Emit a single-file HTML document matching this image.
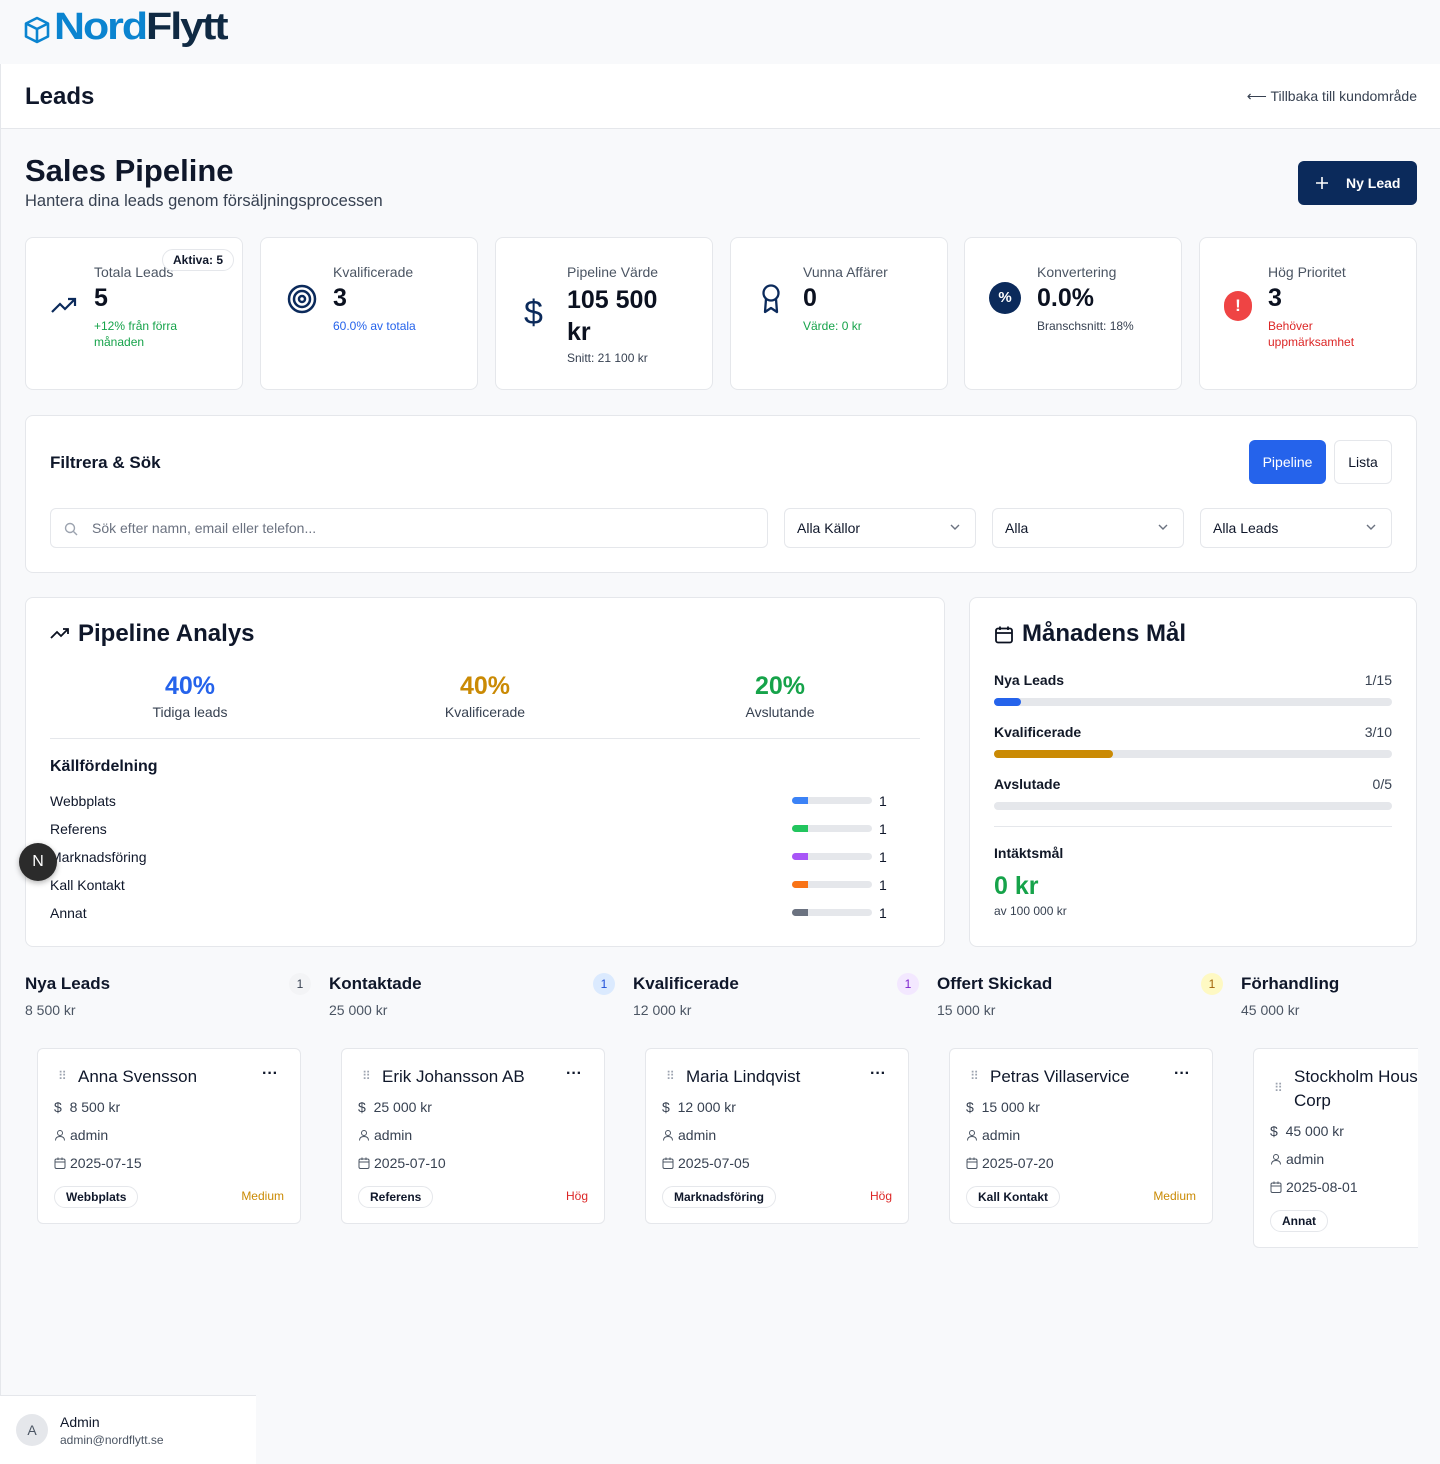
<!DOCTYPE html>
<html><head><meta charset="utf-8"><style>
*{box-sizing:border-box;margin:0;padding:0}
body{width:1440px;height:1464px;background:#f8f9fb;font-family:"Liberation Sans",Arial,sans-serif;color:#0f172a;position:relative;overflow:hidden}
.a{position:absolute}
.card{position:absolute;background:#fff;border:1px solid #e5e7eb;border-radius:8px}
.stat .lbl{font-size:14px;color:#4b5563}
.stat .val{font-size:25px;font-weight:bold;color:#0b1120}
.stat .sub{font-size:12px;line-height:16px}
.sel{position:absolute;top:508px;height:40px;background:#fff;border:1px solid #e5e7eb;border-radius:6px;font-size:14px;padding:11px 12px}
.sel svg{position:absolute;right:14px;top:14px}
.bar{position:absolute;left:792px;width:80px;height:7px;border-radius:4px;background:#e5e7eb;overflow:hidden}
.bar i{display:block;height:100%;width:16px}
.lc{position:absolute;background:#fff;border:1px solid #e5e7eb;border-radius:6px;width:264px}
.lc .t{position:absolute;left:40px;top:18px;font-size:17px}
.lc .row{position:absolute;left:16px;font-size:14px;color:#374151;display:flex;align-items:center;gap:4px}
.lc .row svg{flex:none}
.tag{position:absolute;left:16px;border:1px solid #e5e7eb;border-radius:12px;font-size:12px;font-weight:bold;padding:3px 11px}
.pr{position:absolute;right:16px;font-size:12px}
.colh{position:absolute;top:974px}
.colh b{font-size:17px;font-weight:bold;display:block}
.colh span{font-size:14px;color:#4b5563;display:block;margin-top:8px}
.cnt{position:absolute;top:973px;width:22px;height:22px;border-radius:11px;font-size:12px;text-align:center;line-height:22px}
</style></head><body>
<svg width="0" height="0" style="position:absolute"><defs>
<symbol id="u" viewBox="0 0 12 12"><circle cx="6" cy="4" r="2.5" fill="none" stroke="#4b5563" stroke-width="1"/><path d="M1.5 11.5C1.5 8.5 3.5 7.5 6 7.5S10.5 8.5 10.5 11.5" fill="none" stroke="#4b5563" stroke-width="1"/></symbol>
<symbol id="c" viewBox="0 0 12 12"><rect x="1" y="2" width="10" height="9.5" rx="1.5" fill="none" stroke="#4b5563" stroke-width="1"/><path d="M1 5H11M4 0.5V3M8 0.5V3" stroke="#4b5563" stroke-width="1"/></symbol>
</defs></svg>
<!-- logo -->
<svg class="a" style="left:24px;top:16px" width="26" height="28" viewBox="0 0 26 28"><path d="M13 2L24 7.5V20.5L13 26L2 20.5V7.5Z M2 7.5L13 13L24 7.5 M13 13V26" fill="none" stroke="#0b84d0" stroke-width="2.6" stroke-linejoin="round"/></svg>
<div class="a" style="left:54px;top:6px;font-size:38px;font-weight:bold;letter-spacing:-1.8px;transform:scaleX(1.13);transform-origin:left"><span style="color:#0b84d0">Nord</span><span style="color:#102a43">Flytt</span></div>
<!-- header -->
<div class="a" style="left:0;top:64px;width:1440px;height:65px;background:#fff;border-bottom:1px solid #e5e7eb;border-left:1px solid #e5e7eb"></div>
<div class="a" style="left:0;top:128px;width:1px;height:1270px;background:#e5e7eb"></div>
<div class="a" style="left:25px;top:83px;font-size:24px;font-weight:bold">Leads</div>
<div class="a" style="right:23px;top:88px;font-size:14px;color:#374151">⟵ Tillbaka till kundområde</div>
<div class="a" style="left:25px;top:153px;font-size:31px;font-weight:bold">Sales Pipeline</div>
<div class="a" style="left:25px;top:192px;font-size:16.5px;color:#374151">Hantera dina leads genom försäljningsprocessen</div>
<div class="a" style="left:1298px;top:161px;width:119px;height:44px;background:#0b2a5b;border-radius:6px;color:#fff;font-size:14px;font-weight:bold;padding:14px 0 0 48px">Ny Lead</div>
<svg class="a" style="left:1315px;top:176px" width="14" height="14" viewBox="0 0 14 14"><path d="M7 1V13M1 7H13" stroke="#fff" stroke-width="1.6"/></svg>
<!-- stats -->
<div class="card stat" style="left:25px;top:237px;width:218px;height:153px">
 <svg class="a" style="left:24px;top:58px" width="28" height="20" viewBox="0 0 28 20"><path d="M2 16L10 8L15 13L25 3M18 3H25V10" fill="none" stroke="#0b2a5b" stroke-width="2.2"/></svg>
 <div class="a lbl" style="left:68px;top:26px">Totala Leads</div>
 <div class="a val" style="left:68px;top:46px">5</div>
 <div class="a sub" style="left:68px;top:80px;color:#16a34a">+12% från förra<br>månaden</div>
 <div class="a" style="left:136px;top:11px;border:1px solid #e5e7eb;background:#fff;border-radius:11px;font-size:12px;font-weight:bold;padding:3px 10px">Aktiva: 5</div>
</div>
<div class="card stat" style="left:260px;top:237px;width:218px;height:153px">
 <svg class="a" style="left:25px;top:45px" width="32" height="32" viewBox="0 0 32 32"><circle cx="16" cy="16" r="13" fill="none" stroke="#0b2a5b" stroke-width="2.5"/><circle cx="16" cy="16" r="8" fill="none" stroke="#0b2a5b" stroke-width="2.5"/><circle cx="16" cy="16" r="3" fill="none" stroke="#0b2a5b" stroke-width="2.5"/></svg>
 <div class="a lbl" style="left:72px;top:26px">Kvalificerade</div>
 <div class="a val" style="left:72px;top:46px">3</div>
 <div class="a sub" style="left:72px;top:80px;color:#2563eb">60.0% av totala</div>
</div>
<div class="card stat" style="left:495px;top:237px;width:218px;height:153px">
 <div class="a" style="left:28px;top:56px;font-size:34px;color:#0b2a5b">$</div>
 <div class="a lbl" style="left:71px;top:26px">Pipeline Värde</div>
 <div class="a val" style="left:71px;top:46px;line-height:32px">105 500<br>kr</div>
 <div class="a sub" style="left:71px;top:112px;color:#374151">Snitt: 21 100 kr</div>
</div>
<div class="card stat" style="left:730px;top:237px;width:218px;height:153px">
 <svg class="a" style="left:28px;top:45px" width="24" height="32" viewBox="0 0 24 32"><circle cx="12" cy="10" r="7.5" fill="none" stroke="#0b2a5b" stroke-width="2.3"/><path d="M7 16L6 29L12 25L18 29L17 16" fill="none" stroke="#0b2a5b" stroke-width="2.3" stroke-linejoin="round"/></svg>
 <div class="a lbl" style="left:72px;top:26px">Vunna Affärer</div>
 <div class="a val" style="left:72px;top:46px">0</div>
 <div class="a sub" style="left:72px;top:80px;color:#16a34a">Värde: 0 kr</div>
</div>
<div class="card stat" style="left:964px;top:237px;width:218px;height:153px">
 <div class="a" style="left:24px;top:44px;width:32px;height:32px;border-radius:16px;background:#0b2a5b;color:#fff;font-size:15px;font-weight:bold;text-align:center;line-height:32px">%</div>
 <div class="a lbl" style="left:72px;top:26px">Konvertering</div>
 <div class="a val" style="left:72px;top:46px">0.0%</div>
 <div class="a sub" style="left:72px;top:80px;color:#374151">Branschsnitt: 18%</div>
</div>
<div class="card stat" style="left:1199px;top:237px;width:218px;height:153px">
 <div class="a" style="left:24px;top:53px;width:28px;height:30px;border-radius:14px;background:#ef4444;color:#fff;font-size:17px;font-weight:bold;text-align:center;line-height:30px">!</div>
 <div class="a lbl" style="left:68px;top:26px">Hög Prioritet</div>
 <div class="a val" style="left:68px;top:46px">3</div>
 <div class="a sub" style="left:68px;top:80px;color:#dc2626">Behöver<br>uppmärksamhet</div>
</div>
<!-- filter -->
<div class="card" style="left:25px;top:415px;width:1392px;height:158px"></div>
<div class="a" style="left:50px;top:453px;font-size:17px;font-weight:bold">Filtrera &amp; Sök</div>
<div class="a" style="left:1249px;top:440px;width:77px;height:44px;background:#2563eb;border-radius:6px;color:#fff;font-size:14px;text-align:center;line-height:44px">Pipeline</div>
<div class="a" style="left:1334px;top:440px;width:58px;height:44px;background:#fff;border:1px solid #e5e7eb;border-radius:6px;font-size:14px;text-align:center;line-height:42px">Lista</div>
<div class="sel" style="left:50px;width:718px;color:#6b7280;padding-left:41px"><svg style="position:absolute;left:13px;top:13px" width="14" height="14" viewBox="0 0 14 14"><circle cx="6" cy="6" r="4.5" fill="none" stroke="#9ca3af" stroke-width="1.4"/><path d="M9.5 9.5L13 13" stroke="#9ca3af" stroke-width="1.4"/></svg>Sök efter namn, email eller telefon...</div>
<div class="sel" style="left:784px;width:192px">Alla Källor<svg width="12" height="8" viewBox="0 0 12 8"><path d="M2 2L6 6L10 2" fill="none" stroke="#6b7280" stroke-width="1.4"/></svg></div>
<div class="sel" style="left:992px;width:192px">Alla<svg width="12" height="8" viewBox="0 0 12 8"><path d="M2 2L6 6L10 2" fill="none" stroke="#6b7280" stroke-width="1.4"/></svg></div>
<div class="sel" style="left:1200px;width:192px">Alla Leads<svg width="12" height="8" viewBox="0 0 12 8"><path d="M2 2L6 6L10 2" fill="none" stroke="#6b7280" stroke-width="1.4"/></svg></div>
<!-- pipeline analys -->
<div class="card" style="left:25px;top:597px;width:920px;height:350px"></div>
<svg class="a" style="left:50px;top:626px" width="20" height="16" viewBox="0 0 20 16"><path d="M1 12L7 6L11 10L18 3M13 3H18V8" fill="none" stroke="#0b1120" stroke-width="1.8"/></svg>
<div class="a" style="left:78px;top:620px;font-size:24px;font-weight:bold">Pipeline Analys</div>
<div class="a" style="left:90px;top:672px;width:200px;text-align:center;font-size:25px;font-weight:bold;color:#2563eb">40%</div>
<div class="a" style="left:90px;top:704px;width:200px;text-align:center;font-size:14px;color:#374151">Tidiga leads</div>
<div class="a" style="left:385px;top:672px;width:200px;text-align:center;font-size:25px;font-weight:bold;color:#ca8a04">40%</div>
<div class="a" style="left:385px;top:704px;width:200px;text-align:center;font-size:14px;color:#374151">Kvalificerade</div>
<div class="a" style="left:680px;top:672px;width:200px;text-align:center;font-size:25px;font-weight:bold;color:#16a34a">20%</div>
<div class="a" style="left:680px;top:704px;width:200px;text-align:center;font-size:14px;color:#374151">Avslutande</div>
<div class="a" style="left:50px;top:738px;width:870px;height:1px;background:#e5e7eb"></div>
<div class="a" style="left:50px;top:758px;font-size:16px;font-weight:bold">Källfördelning</div>
<div class="a" style="left:50px;top:787px;font-size:14px;line-height:28px">Webbplats<br>Referens<br>Marknadsföring<br>Kall Kontakt<br>Annat</div>
<div class="bar" style="top:797px"><i style="background:#3b82f6"></i></div>
<div class="bar" style="top:825px"><i style="background:#22c55e"></i></div>
<div class="bar" style="top:853px"><i style="background:#a855f7"></i></div>
<div class="bar" style="top:881px"><i style="background:#f97316"></i></div>
<div class="bar" style="top:909px"><i style="background:#6b7280"></i></div>
<div class="a" style="left:879px;top:787px;font-size:14px;line-height:28px">1<br>1<br>1<br>1<br>1</div>
<div class="a" style="left:19px;top:843px;width:38px;height:38px;border-radius:19px;background:#2b2b2b;color:#fff;font-size:16px;text-align:center;line-height:38px;box-shadow:0 2px 6px rgba(0,0,0,.3)">N</div>
<!-- mål -->
<div class="card" style="left:969px;top:597px;width:448px;height:350px"></div>
<svg class="a" style="left:994px;top:625px" width="20" height="20" viewBox="0 0 20 20"><rect x="2" y="3.5" width="16" height="14" rx="2" fill="none" stroke="#0b1120" stroke-width="1.8"/><path d="M2 8H18M6 1.5V5M14 1.5V5" stroke="#0b1120" stroke-width="1.8"/></svg>
<div class="a" style="left:1022px;top:620px;font-size:24px;font-weight:bold">Månadens Mål</div>
<div class="a" style="left:994px;top:672px;font-size:14px;font-weight:bold;color:#111827">Nya Leads</div><div class="a" style="left:1360px;top:672px;width:32px;text-align:right;font-size:14px;color:#374151">1/15</div>
<div class="a" style="left:994px;top:698px;width:398px;height:8px;border-radius:4px;background:#e5e7eb"><div style="width:27px;height:8px;border-radius:4px;background:#2563eb"></div></div>
<div class="a" style="left:994px;top:724px;font-size:14px;font-weight:bold;color:#111827">Kvalificerade</div><div class="a" style="left:1350px;top:724px;width:42px;text-align:right;font-size:14px;color:#374151">3/10</div>
<div class="a" style="left:994px;top:750px;width:398px;height:8px;border-radius:4px;background:#e5e7eb"><div style="width:119px;height:8px;border-radius:4px;background:#ca8a04"></div></div>
<div class="a" style="left:994px;top:776px;font-size:14px;font-weight:bold;color:#111827">Avslutade</div><div class="a" style="left:1350px;top:776px;width:42px;text-align:right;font-size:14px;color:#374151">0/5</div>
<div class="a" style="left:994px;top:802px;width:398px;height:8px;border-radius:4px;background:#e5e7eb"></div>
<div class="a" style="left:994px;top:826px;width:398px;height:1px;background:#e5e7eb"></div>
<div class="a" style="left:994px;top:845px;font-size:14px;font-weight:bold;color:#111827">Intäktsmål</div>
<div class="a" style="left:994px;top:872px;font-size:25px;font-weight:bold;color:#16a34a">0 kr</div>
<div class="a" style="left:994px;top:904px;font-size:12px;color:#374151">av 100 000 kr</div>
<!-- kanban -->
<div class="colh" style="left:25px"><b>Nya Leads</b><span>8 500 kr</span></div><div class="cnt" style="left:289px;background:#f3f4f6;color:#374151">1</div>
<div class="colh" style="left:329px"><b>Kontaktade</b><span>25 000 kr</span></div><div class="cnt" style="left:593px;background:#dbeafe;color:#1d4ed8">1</div>
<div class="colh" style="left:633px"><b>Kvalificerade</b><span>12 000 kr</span></div><div class="cnt" style="left:897px;background:#f3e8ff;color:#7e22ce">1</div>
<div class="colh" style="left:937px"><b>Offert Skickad</b><span>15 000 kr</span></div><div class="cnt" style="left:1201px;background:#fef9c3;color:#a16207">1</div>
<div class="colh" style="left:1241px"><b>Förhandling</b><span>45 000 kr</span></div>

<div class="lc" style="left:37px;top:1048px;height:176px"><div class="a" style="left:20px;top:20px;color:#9ca3af;font-size:12px">⠿</div><div class="t">Anna Svensson</div><div class="a" style="right:22px;top:16px;font-weight:bold">···</div>
<div class="row" style="top:50px">$ &nbsp;8 500 kr</div><div class="row" style="top:78px"><svg width="12" height="12"><use href="#u"/></svg>admin</div><div class="row" style="top:106px"><svg width="12" height="12"><use href="#c"/></svg>2025-07-15</div><div class="tag" style="top:137px">Webbplats</div><div class="pr" style="top:140px;color:#ca8a04">Medium</div></div>
<div class="lc" style="left:341px;top:1048px;height:176px"><div class="a" style="left:20px;top:20px;color:#9ca3af;font-size:12px">⠿</div><div class="t">Erik Johansson AB</div><div class="a" style="right:22px;top:16px;font-weight:bold">···</div>
<div class="row" style="top:50px">$ &nbsp;25 000 kr</div><div class="row" style="top:78px"><svg width="12" height="12"><use href="#u"/></svg>admin</div><div class="row" style="top:106px"><svg width="12" height="12"><use href="#c"/></svg>2025-07-10</div><div class="tag" style="top:137px">Referens</div><div class="pr" style="top:140px;color:#dc2626">Hög</div></div>
<div class="lc" style="left:645px;top:1048px;height:176px"><div class="a" style="left:20px;top:20px;color:#9ca3af;font-size:12px">⠿</div><div class="t">Maria Lindqvist</div><div class="a" style="right:22px;top:16px;font-weight:bold">···</div>
<div class="row" style="top:50px">$ &nbsp;12 000 kr</div><div class="row" style="top:78px"><svg width="12" height="12"><use href="#u"/></svg>admin</div><div class="row" style="top:106px"><svg width="12" height="12"><use href="#c"/></svg>2025-07-05</div><div class="tag" style="top:137px">Marknadsföring</div><div class="pr" style="top:140px;color:#dc2626">Hög</div></div>
<div class="lc" style="left:949px;top:1048px;height:176px"><div class="a" style="left:20px;top:20px;color:#9ca3af;font-size:12px">⠿</div><div class="t">Petras Villaservice</div><div class="a" style="right:22px;top:16px;font-weight:bold">···</div>
<div class="row" style="top:50px">$ &nbsp;15 000 kr</div><div class="row" style="top:78px"><svg width="12" height="12"><use href="#u"/></svg>admin</div><div class="row" style="top:106px"><svg width="12" height="12"><use href="#c"/></svg>2025-07-20</div><div class="tag" style="top:137px">Kall Kontakt</div><div class="pr" style="top:140px;color:#ca8a04">Medium</div></div>
<div class="lc" style="left:1253px;top:1048px;height:200px;border-right:none;border-radius:6px 0 0 6px;width:165px;overflow:hidden"><div class="a" style="left:20px;top:32px;color:#9ca3af;font-size:12px">⠿</div><div class="t" style="white-space:nowrap;line-height:24px;top:16px">Stockholm Hous<br>Corp</div>
<div class="row" style="top:74px">$ &nbsp;45 000 kr</div><div class="row" style="top:102px"><svg width="12" height="12"><use href="#u"/></svg>admin</div><div class="row" style="top:130px"><svg width="12" height="12"><use href="#c"/></svg>2025-08-01</div><div class="tag" style="top:161px">Annat</div></div>
<!-- admin -->
<div class="a" style="left:0;top:1395px;width:256px;height:69px;background:#fff;border-top:1px solid #e5e7eb"></div>
<div class="a" style="left:16px;top:1414px;width:32px;height:32px;border-radius:16px;background:#e5e7eb;color:#4b5563;font-size:14px;text-align:center;line-height:32px">A</div>
<div class="a" style="left:60px;top:1414px;font-size:14px">Admin</div>
<div class="a" style="left:60px;top:1433px;font-size:12px;color:#4b5563">admin@nordflytt.se</div>
</body></html>
